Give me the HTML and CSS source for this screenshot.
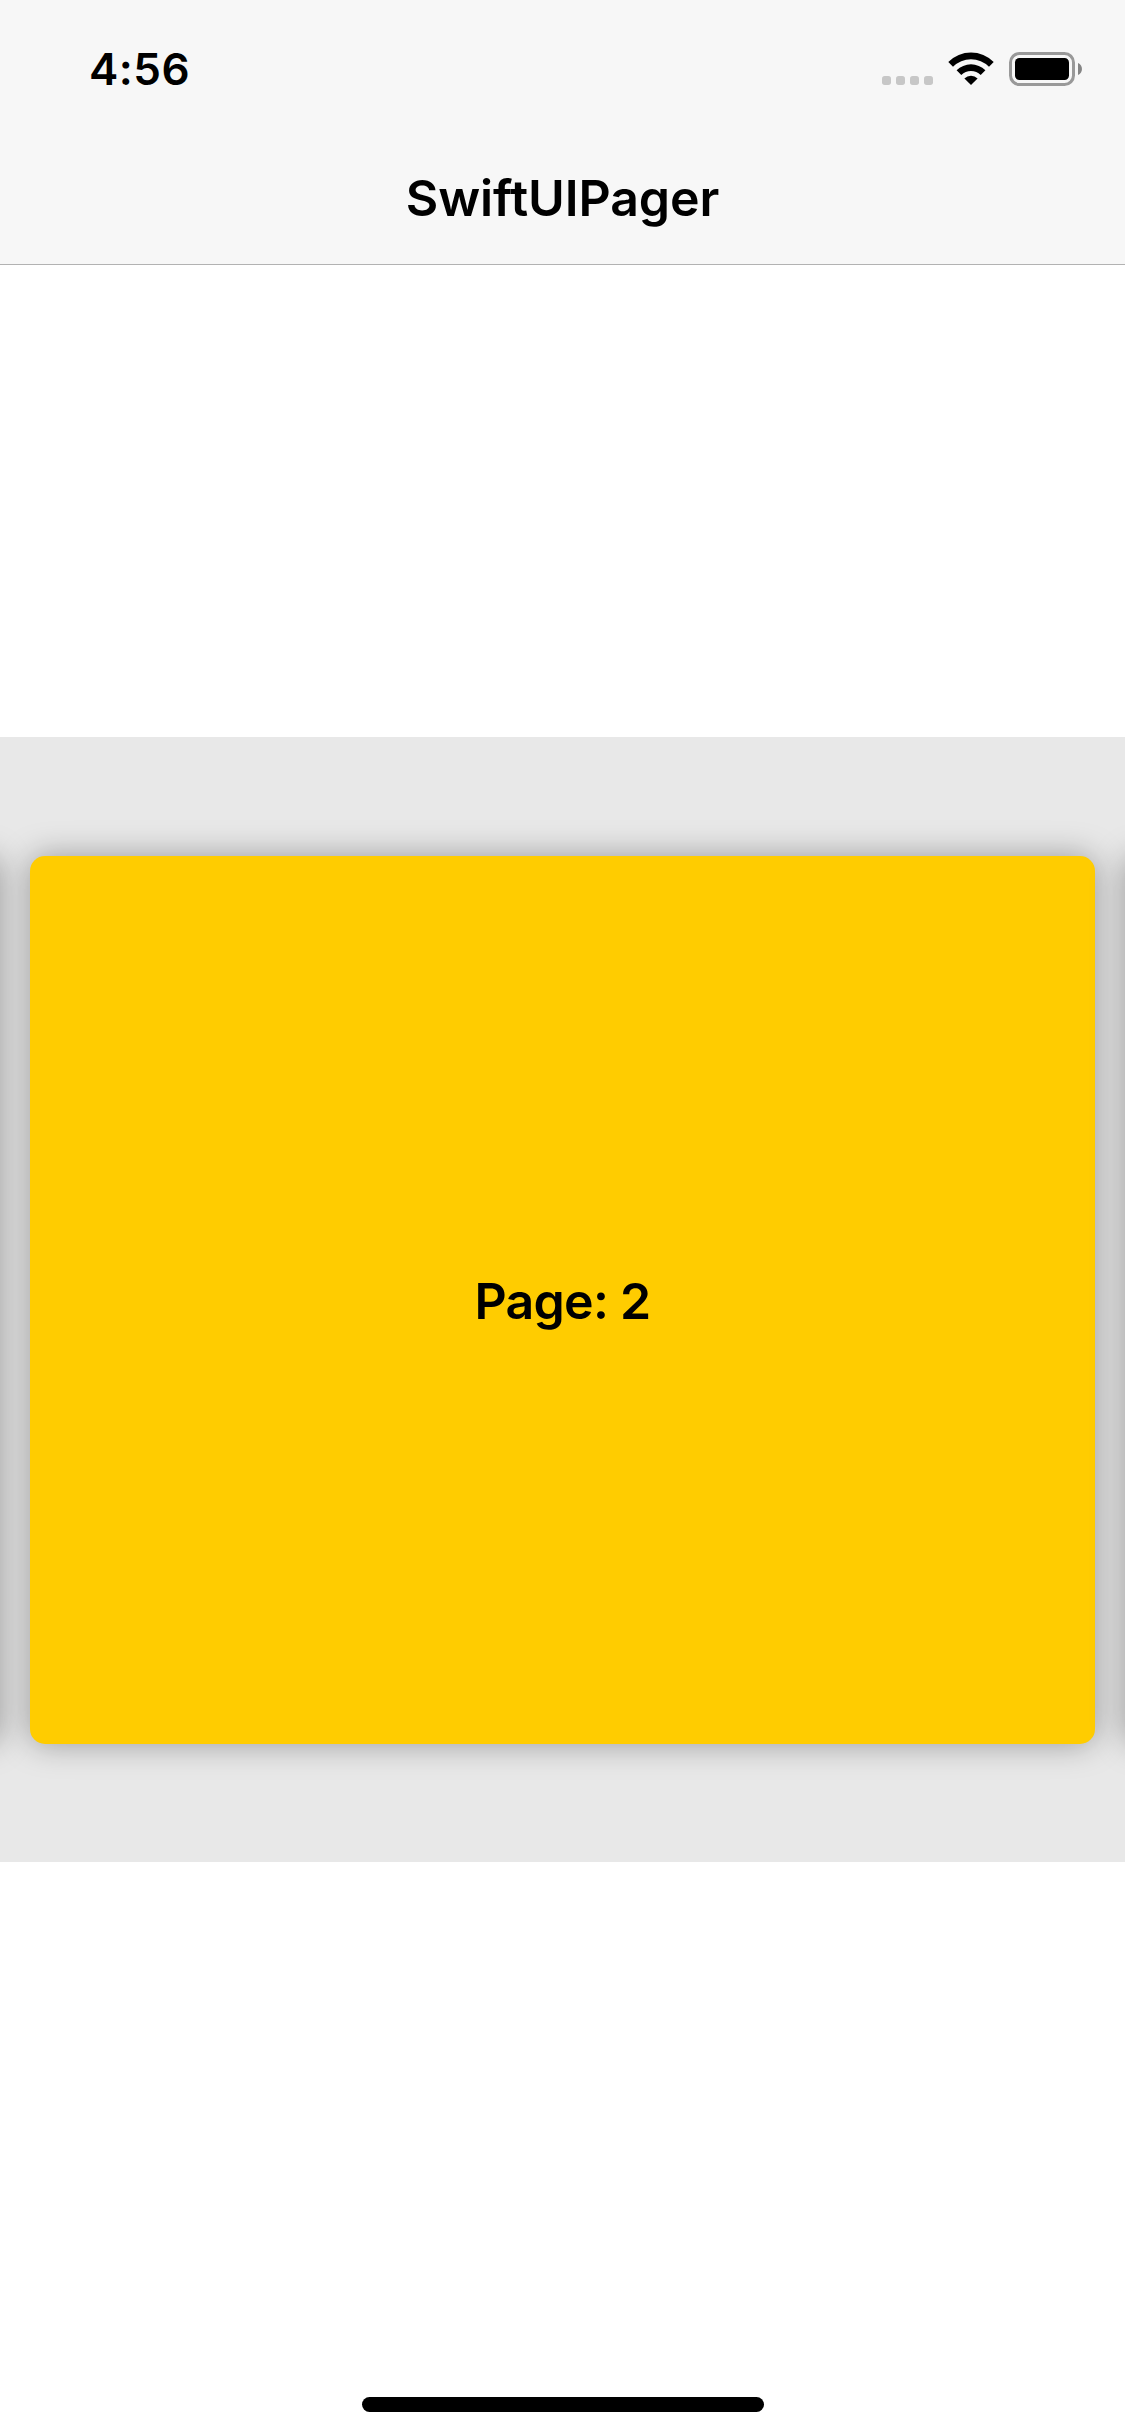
FILE: index.html
```html
<!DOCTYPE html>
<html lang="en">
<head>
<meta charset="utf-8">
<title>SwiftUIPager</title>
<link rel="stylesheet" href="styles.css">
</head>
<body>
<div class="screen">
  <header class="header">
    <div class="status">
      <span class="time">4:56</span>
      <svg class="indicators" width="204" height="36" viewBox="0 0 204 36">
        <g fill="#c7c7c7">
          <rect x="2" y="26" width="9" height="9" rx="2.7"/>
          <rect x="16" y="26" width="9" height="9" rx="2.7"/>
          <rect x="30" y="26" width="9" height="9" rx="2.7"/>
          <rect x="44" y="26" width="9" height="9" rx="2.7"/>
        </g>
        <path d="M68.3 12A32 32 0 0 1 113.7 12L109 16.7A25.5 25.5 0 0 0 73 16.7Z"/>
        <path d="M76.6 20.3A20.4 20.4 0 0 1 105.4 20.3L100.7 24.9A13.8 13.8 0 0 0 81.3 24.9Z"/>
        <path d="M84.4 28.4A9.5 9.5 0 0 1 97.6 28.4L91 35Z"/>
        <rect x="130.5" y="3.5" width="63" height="31" rx="9" fill="none" stroke="#999" stroke-width="3"/>
        <rect x="135" y="8" width="54" height="22" rx="4.5"/>
        <path d="M198 13C203.3 15 203.3 23 198 25Z" fill="#858585"/>
      </svg>
    </div>
    <h1 class="title">SwiftUIPager</h1>
  </header>
  <main class="content">
    <div class="pager">
      <div class="page"></div>
      <div class="page"><span class="label">Page: 2</span></div>
      <div class="page"></div>
    </div>
  </main>
  <footer class="footer"><div class="home"></div></footer>
</div>
</body>
</html>
```
FILE: styles.css
```css
body {
  margin: 0;
  background: #fff;
  color: #000;
  font-family: Inter, "Liberation Sans", sans-serif;
}
.screen {
  display: flex;
  flex-direction: column;
  width: 1125px;
  height: 2436px;
  overflow: hidden;
}
.header {
  box-sizing: border-box;
  height: 265px;
  background: #f7f7f7;
  border-bottom: 1px solid #b2b2b2;
}
.status {
  display: flex;
  justify-content: space-between;
  height: 132px;
  padding: 50px 41px 0 89px;
  box-sizing: border-box;
}
.time {
  font-size: 44px;
  font-weight: 600;
  line-height: 38px;
  letter-spacing: 0.5px;
}
.indicators {
  display: block;
  overflow: visible;
}
.title {
  margin: 0;
  font-size: 50px;
  font-weight: 600;
  line-height: 132px;
  text-align: center;
  letter-spacing: -0.1px;
  font-feature-settings: "calt" 0;
}
.content {
  flex: 1;
  padding-top: 472px;
}
.pager {
  display: flex;
  align-items: center;
  justify-content: center;
  gap: 30px;
  height: 1125px;
  overflow: hidden;
  background: #e8e8e8;
}
.page {
  display: flex;
  flex: none;
  align-items: center;
  justify-content: center;
  width: 1065px;
  height: 888px;
  border-radius: 15px;
  background: #fc0;
  box-shadow: 0 0 32px rgba(0, 0, 0, 0.34);
}
.label {
  padding-top: 2px;
  font-size: 50px;
  font-weight: 600;
  letter-spacing: -0.7px;
}
.footer {
  display: flex;
  justify-content: center;
  padding-bottom: 24px;
}
.home {
  width: 402px;
  height: 15px;
  border-radius: 8px;
  background: #000;
}
```
